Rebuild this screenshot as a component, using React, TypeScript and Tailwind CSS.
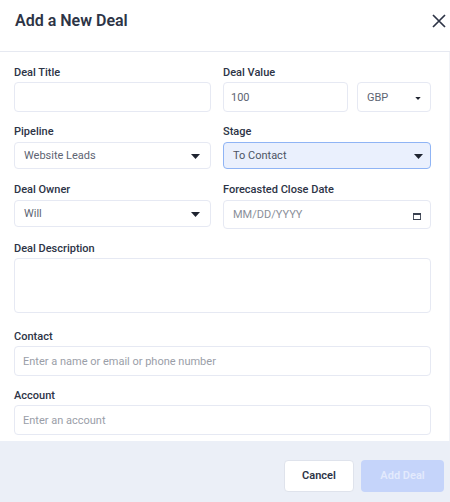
import React from "react";

const Label = ({ children }: { children: React.ReactNode }) => (
  <div className="h-[15px] text-[11px] leading-[15px] font-medium text-[#2d3446]">{children}</div>
);
const Caret = ({ small }: { small?: boolean }) => (
  <svg width={small ? 6 : 9} height={small ? 3 : 5} viewBox="0 0 9 5"><path d="M0 0h9L4.5 5z" fill="#1f2430" /></svg>
);
const Field = ({ h = "h-[30px]", children, className = "" }: { h?: string; children?: React.ReactNode; className?: string }) => (
  <div className={`${h} ${className} flex items-center justify-between rounded-[4px] border border-[#e6e9f3] bg-white pt-[2px] text-[11px] text-[#5d6472]`}>{children}</div>
);

export default function App() {
  return (
    <div className="flex h-[502px] w-[450px] flex-col bg-white font-['Roboto',sans-serif]">
      <header className="flex h-[52px] shrink-0 items-start justify-between border-b border-[#e6e9f1] pt-[11px] pr-[4px] pl-[15px]">
        <h1 className="text-[16px] leading-[20px] font-semibold text-[#2d3446]">Add a New Deal</h1>
        <svg width="14" height="14" viewBox="0 0 14 14" className="mt-[3px]" stroke="#2d3446" strokeWidth="1.7"><path d="M1 1l12 12M13 1L1 13" /></svg>
      </header>
      <main className="flex grow flex-col border-r border-[#f0f2f7] pt-[13px] pr-[18px] pl-[14px]">
        <div className="flex gap-[12px]">
          <div className="w-[197px]">
            <Label>Deal Title</Label>
            <Field className="mt-[2px]" />
          </div>
          <div className="flex-1">
            <Label>Deal Value</Label>
            <div className="mt-[2px] flex gap-[9px]">
              <Field className="w-[125px] px-[7px]">100</Field>
              <Field className="flex-1 pr-[9px] pl-[9px]">GBP <Caret small /></Field>
            </div>
          </div>
        </div>
        <div className="mt-[12px] flex gap-[12px]">
          <div className="w-[197px]">
            <Label>Pipeline</Label>
            <Field h="h-[27px]" className="mt-[3px] pr-[10px] pl-[9px]">Website Leads <Caret /></Field>
          </div>
          <div className="flex-1">
            <Label>Stage</Label>
            <div className="mt-[3px] flex h-[27px] items-center justify-between rounded-[4px] border border-[#8fb4f5] bg-[#eaf0fd] pt-[2px] pr-[7px] pl-[9px] text-[11px] text-[#4d5464]">To Contact <Caret /></div>
          </div>
        </div>
        <div className="mt-[13px] flex gap-[12px]">
          <div className="w-[197px]">
            <Label>Deal Owner</Label>
            <Field h="h-[27px]" className="mt-[3px] pr-[10px] pl-[9px]">Will <Caret /></Field>
          </div>
          <div className="flex-1">
            <Label>Forecasted Close Date</Label>
            <Field h="h-[29px]" className="mt-[3px] px-[9px] text-[#8a8f9a]">
              MM/DD/YYYY
              <svg width="8" height="8" viewBox="0 0 9 9"><path fill="#3a4150" d="M0 1h9v8H0zM1 3.5V8h7V3.5z" fillRule="evenodd" /></svg>
            </Field>
          </div>
        </div>
        <div className="mt-[12px]">
          <Label>Deal Description</Label>
          <Field h="h-[55px]" className="mt-[2px]" />
        </div>
        <div className="mt-[16px]">
          <Label>Contact</Label>
          <Field className="mt-[2px] pl-[8px] text-[#9a9ea8]">Enter a name or email or phone number</Field>
        </div>
        <div className="mt-[12px]">
          <Label>Account</Label>
          <Field className="mt-[2px] pl-[8px] text-[#9a9ea8]">Enter an account</Field>
        </div>
      </main>
      <footer className="flex h-[61px] shrink-0 items-start justify-end gap-[7px] bg-[#ebeff7] pt-[19px] pr-[6px]">
        <button className="h-[32px] w-[70px] rounded-[4px] border border-[#dfe3ec] bg-white pt-[1px] text-[11px] font-semibold text-[#2d3446]">Cancel</button>
        <button className="h-[32px] w-[83px] rounded-[4px] bg-[#c5d4fa] pt-[1px] text-[11px] font-semibold text-[#e3eafd]">Add Deal</button>
      </footer>
    </div>
  );
}
